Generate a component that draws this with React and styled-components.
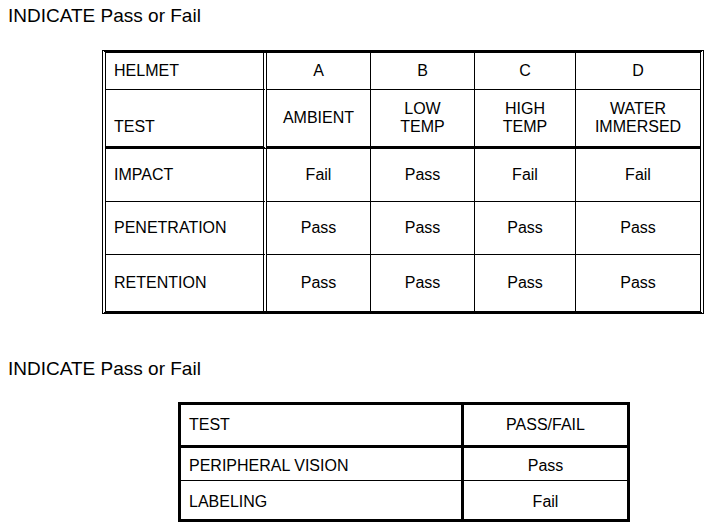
import React from 'react';
import styled, { createGlobalStyle } from 'styled-components';

const GlobalStyle = createGlobalStyle`
  html, body { margin: 0; padding: 0; background: #fff; }
  body { font-family: "Liberation Sans", Arial, sans-serif; color: #000; }
  * { box-sizing: border-box; }
`;

const Page = styled.div`
  width: 719px;
  height: 529px;
  padding: 5px 0 0 8px;
  overflow: hidden;
  display: flex;
  flex-direction: column;
  align-items: flex-start;
`;

const Title = styled.h2`
  margin: ${(p) => p.$mt}px 0 0 0;
  font-size: 19px;
  font-weight: normal;
  line-height: 22px;
`;

const Table = styled.div`
  display: grid;
  grid-template-columns: ${(p) => p.$cols};
  grid-template-rows: ${(p) => p.$rows};
  margin-left: ${(p) => p.$ml}px;
  margin-top: ${(p) => p.$mt}px;
  border-top: 3px solid #000;
  border-bottom: 3px solid #000;
  border-left: ${(p) => p.$side};
  border-right: ${(p) => p.$side};
`;

const lines = {
  none: 'none',
  thin: '1px solid #000',
  thick: '3px solid #000',
  double: '4px double #000',
};

const Cell = styled.div`
  display: flex;
  flex-direction: column;
  justify-content: ${(p) => (p.$bottom ? 'flex-end' : 'center')};
  align-items: ${(p) => (p.$left ? 'flex-start' : 'center')};
  text-align: ${(p) => (p.$left ? 'left' : 'center')};
  padding: ${(p) => p.$pt || 0}px 8px ${(p) => (p.$bottom ? 10 : 0)}px 8px;
  font-size: 16px;
  line-height: 18px;
  white-space: nowrap;
  border-right: ${(p) => lines[p.$r || 'none']};
  border-bottom: ${(p) => lines[p.$b || 'none']};
`;

const helmetRows = [
  { cells: ['HELMET', 'A', 'B', 'C', 'D'], b: 'thin' },
  { cells: ['TEST', 'AMBIENT', 'LOW\nTEMP', 'HIGH\nTEMP', 'WATER\nIMMERSED'], b: 'thick', bottomFirst: true },
  { cells: ['IMPACT', 'Fail', 'Pass', 'Fail', 'Fail'], b: 'thin' },
  { cells: ['PENETRATION', 'Pass', 'Pass', 'Pass', 'Pass'], b: 'thin' },
  { cells: ['RETENTION', 'Pass', 'Pass', 'Pass', 'Pass'], b: 'none' },
];

const otherRows = [
  { cells: ['TEST', 'PASS/FAIL'], b: 'thick', pt: 0 },
  { cells: ['PERIPHERAL VISION', 'Pass'], b: 'thin', pt: 3 },
  { cells: ['LABELING', 'Fail'], b: 'none', pt: 3 },
];

const renderText = (t) =>
  t.split('\n').map((line, i) => <span key={i}>{line}</span>);

export default function App() {
  return (
    <>
      <GlobalStyle />
      <Page>
        <Title $mt={0}>INDICATE Pass or Fail</Title>
        <Table
          $ml={94}
          $mt={23}
          $cols="161px 104px 104px 101px 124px"
          $rows="37px 59px 53px 53px 56px"
          $side="4px double #000"
        >
          {helmetRows.map((row, ri) =>
            row.cells.map((c, ci) => (
              <Cell
                key={`${ri}-${ci}`}
                $left={ci === 0}
                $bottom={row.bottomFirst && ci === 0}
                $r={ci === 0 ? 'double' : ci === row.cells.length - 1 ? 'none' : 'thin'}
                $b={row.b}
              >
                {renderText(c)}
              </Cell>
            ))
          )}
        </Table>
        <Title $mt={44}>INDICATE Pass or Fail</Title>
        <Table
          $ml={170}
          $mt={22}
          $cols="283px 163px"
          $rows="43px 33px 38px"
          $side="3px solid #000"
        >
          {otherRows.map((row, ri) =>
            row.cells.map((c, ci) => (
              <Cell
                key={`${ri}-${ci}`}
                $left={ci === 0}
                $pt={row.pt}
                $r={ci === 0 ? 'thick' : 'none'}
                $b={row.b}
              >
                {c}
              </Cell>
            ))
          )}
        </Table>
      </Page>
    </>
  );
}
